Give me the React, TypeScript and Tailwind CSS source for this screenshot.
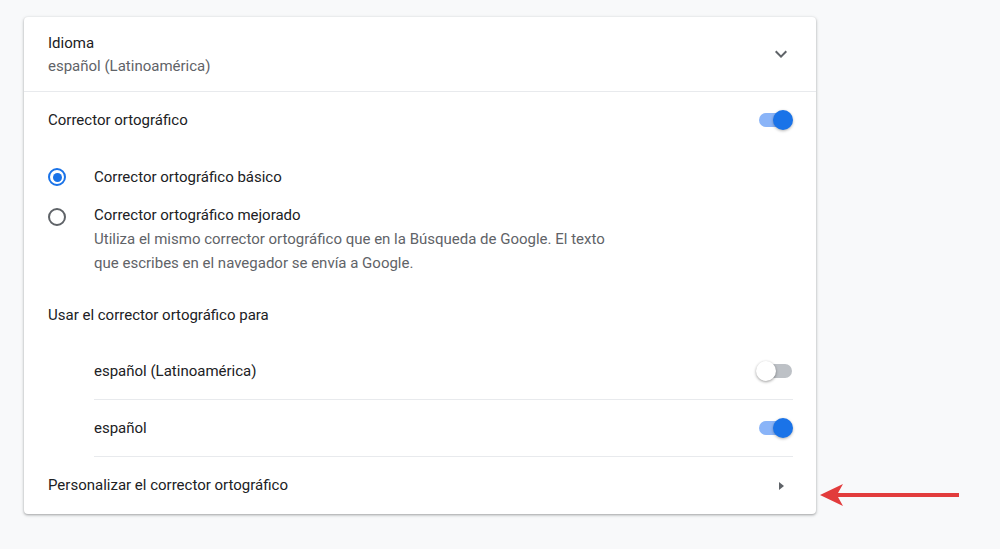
import React from "react";

function Toggle({ on }: { on: boolean }) {
    return (
        <div className="relative w-[37px] h-[20px] flex items-center">
            <div className={`absolute left-[3px] right-[1px] h-[14px] rounded-full ${on ? "bg-[#8ab4f8]" : "bg-[#bdc1c6]"}`} />
            <div
                className={`absolute w-[20px] h-[20px] rounded-full ${on ? "right-0 bg-[#1a73e8] shadow-[0_1px_3px_rgba(0,0,0,0.3)]" : "left-0 bg-white shadow-[0_1px_3px_rgba(0,0,0,0.4)]"}`}
            />
        </div>
    );
}

function Radio({ checked }: { checked: boolean }) {
    return (
        <div
            className={`w-[18px] h-[18px] rounded-full border-2 flex items-center justify-center ${checked ? "border-[#1a73e8]" : "border-[#5f6368]"}`}
        >
            {checked && <div className="w-[9px] h-[9px] rounded-full bg-[#1a73e8]" />}
        </div>
    );
}

export default function App() {
    return (
        <div
            className="w-[1000px] h-[549px] bg-[#f8f9fa] pt-[17px] pl-[24px] relative"
            style={{ fontFamily: "Roboto, 'Liberation Sans', sans-serif" }}
        >
            <div className="w-[792px] bg-white rounded-[4px] shadow-[0_1px_2px_rgba(60,64,67,0.3),0_1px_3px_1px_rgba(60,64,67,0.15)] text-[15px] text-[#202124]">
                {/* Idioma */}
                <div className="h-[75px] flex items-center pl-[24px] pr-[24px] border-b border-[#e8eaed]">
                    <div className="flex-1">
                        <div className="leading-[20px]">Idioma</div>
                        <div className="leading-[20px] mt-[3px] text-[#5f6368]">español (Latinoamérica)</div>
                    </div>
                    <svg width="24" height="24" viewBox="0 0 24 24" className="mr-[-1px]">
                        <path d="M7.41 8.59 12 13.17l4.59-4.58L18 10l-6 6-6-6z" fill="#5f6368" />
                    </svg>
                </div>

                {/* Corrector ortográfico */}
                <div className="h-[56px] flex items-center pl-[24px] pr-[23px]">
                    <div className="flex-1">Corrector ortográfico</div>
                    <Toggle on />
                </div>

                {/* Radios */}
                <div className="pl-[24px] pr-[24px] pt-[15px]">
                    <div className="flex items-center h-[28px]">
                        <div className="w-[46px] flex items-center">
                            <Radio checked />
                        </div>
                        <div>Corrector ortográfico básico</div>
                    </div>
                    <div className="flex items-start mt-[12px]">
                        <div className="w-[46px] pt-[5px]">
                            <Radio checked={false} />
                        </div>
                        <div>
                            <div className="leading-[24px]">Corrector ortográfico mejorado</div>
                            <div className="leading-[24px] text-[#5f6368]">
                                Utiliza el mismo corrector ortográfico que en la Búsqueda de Google. El texto
                                <br />
                                que escribes en el navegador se envía a Google.
                            </div>
                        </div>
                    </div>
                </div>

                {/* Usar para */}
                <div className="h-[56px] flex items-center pl-[24px] mt-[12px]">
                    Usar el corrector ortográfico para
                </div>

                <div className="pl-[70px] pr-[23px]">
                    <div className="h-[57px] flex items-center border-b border-[#e8eaed]">
                        <div className="flex-1">español (Latinoamérica)</div>
                        <Toggle on={false} />
                    </div>
                    <div className="h-[57px] flex items-center border-b border-[#e8eaed]">
                        <div className="flex-1">español</div>
                        <Toggle on />
                    </div>
                </div>

                {/* Personalizar */}
                <div className="h-[57px] flex items-center pl-[24px] pr-[30px]">
                    <div className="flex-1">Personalizar el corrector ortográfico</div>
                    <svg width="10" height="12" viewBox="0 0 10 12">
                        <path d="M3 2 L8 6 L3 10 Z" fill="#5f6368" />
                    </svg>
                </div>
            </div>

            {/* annotation arrow */}
            <svg className="absolute left-[816px] top-[480px]" width="150" height="30" viewBox="0 0 150 30">
                <path d="M143 13 L22 13 L27 4 L4 15 L27 26 L22 17 L143 17 Z" fill="#e23c3c" />
            </svg>
        </div>
    );
}
